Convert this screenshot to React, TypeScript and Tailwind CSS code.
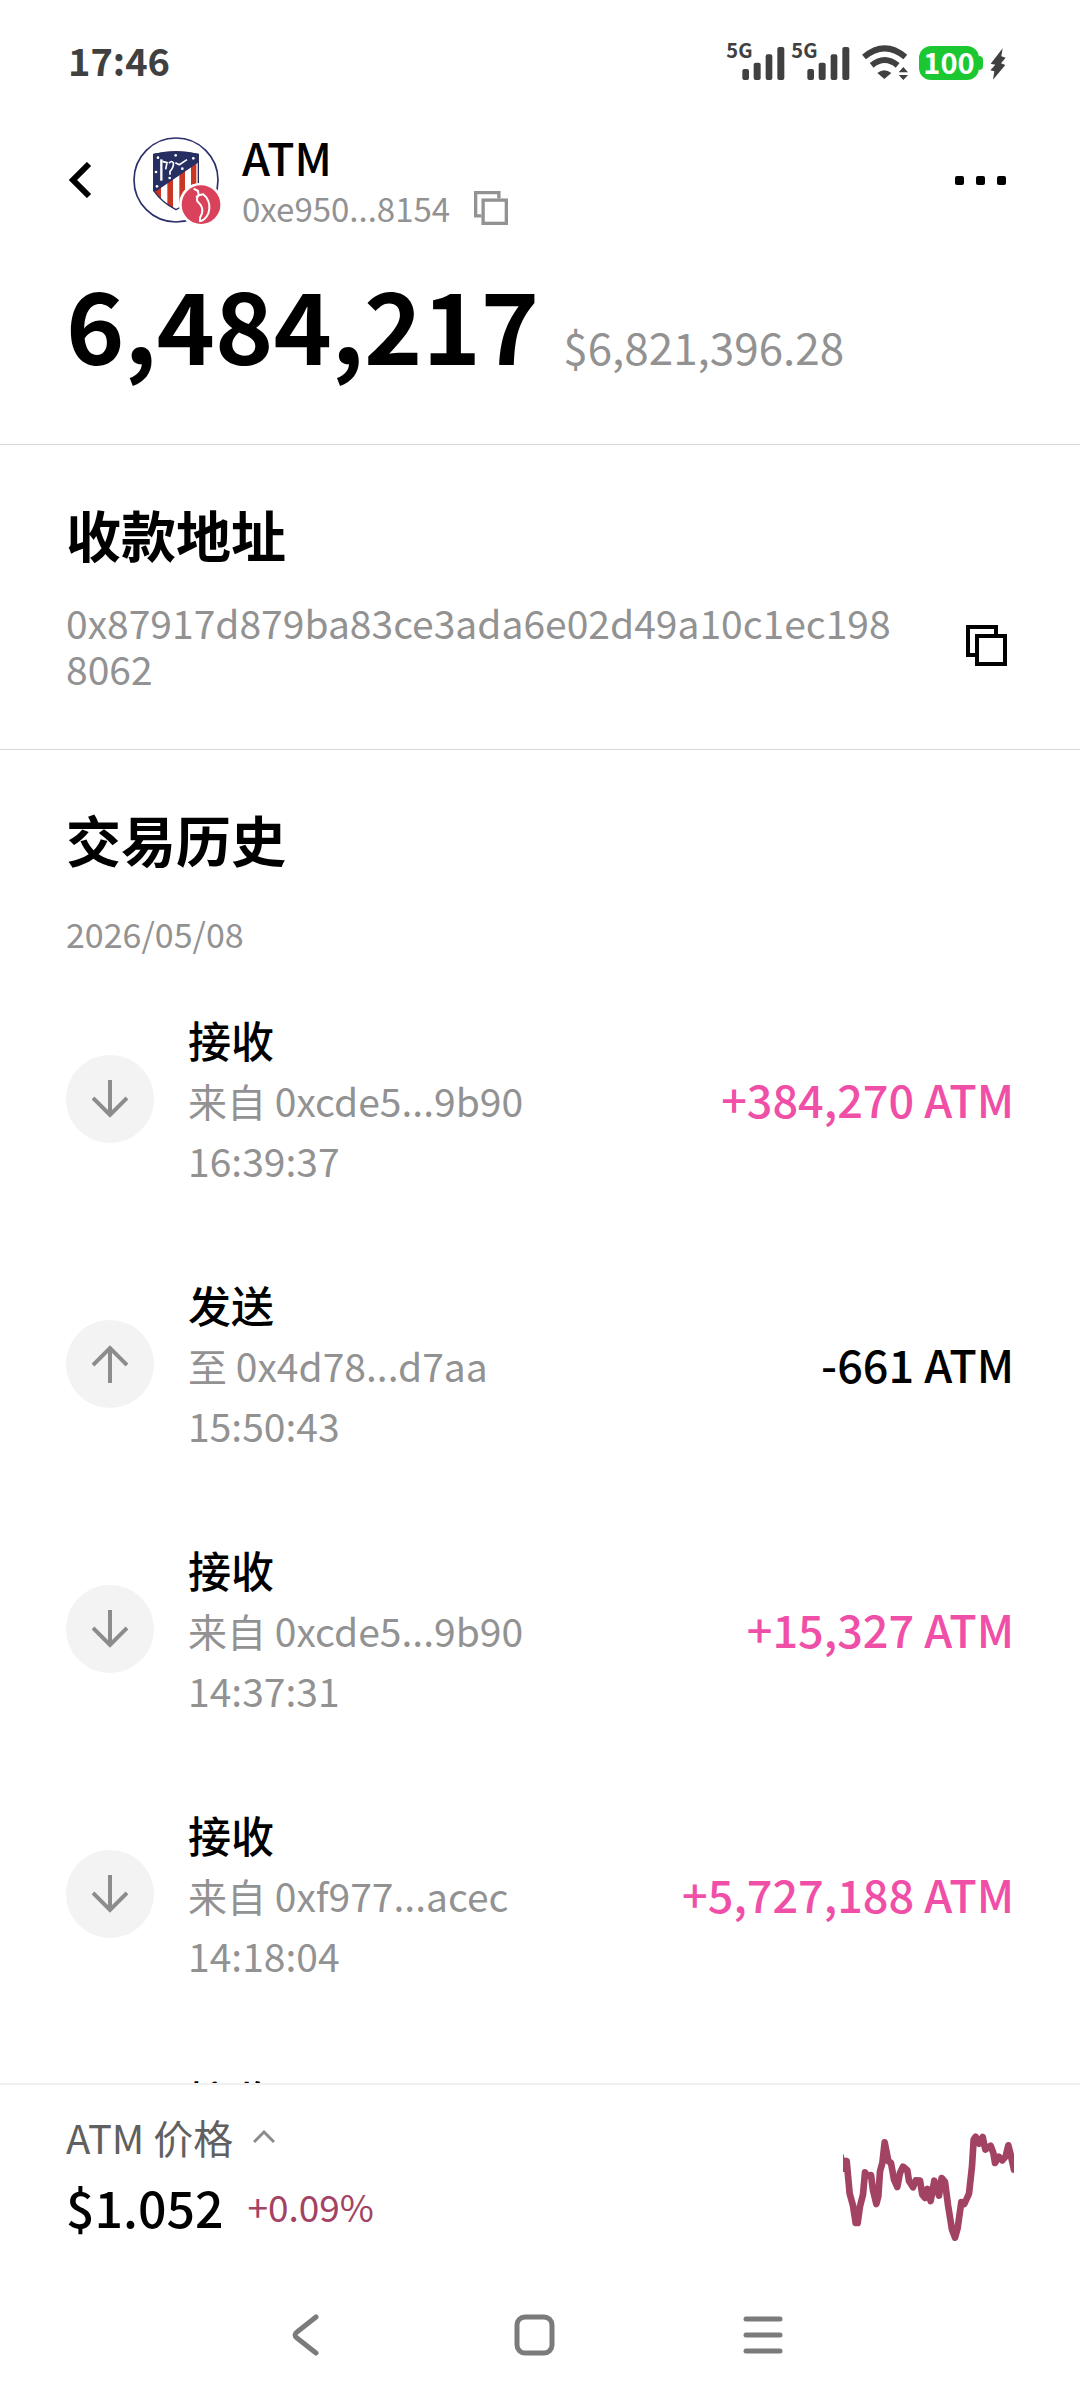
import { useState } from "react";

type TxKind = "in" | "out";

interface Transaction {
    kind: TxKind;
    peer?: string;
    time?: string;
    amount?: string;
}

const WALLET = "0x87917d879ba83ce3ada6e02d49a10c1ec1988062";

const transactions: Transaction[] = [
    { kind: "in", peer: "0xcde5...9b90", time: "16:39:37", amount: "+384,270 ATM" },
    { kind: "out", peer: "0x4d78...d7aa", time: "15:50:43", amount: "-661 ATM" },
    { kind: "in", peer: "0xcde5...9b90", time: "14:37:31", amount: "+15,327 ATM" },
    { kind: "in", peer: "0xf977...acec", time: "14:18:04", amount: "+5,727,188 ATM" },
    { kind: "in" },
];

function Signal() {
    return (
        <svg viewBox="0 0 174 114" className="w-[58px] h-[38px] overflow-visible" fill="#404040">
            <text x="-2" y="48" fontSize="60" fontWeight="700">5G</text>
            <rect x="46" y="81" width="20" height="33" rx="6" />
            <rect x="80" y="62" width="21" height="52" rx="6" />
            <rect x="116" y="37" width="20" height="77" rx="6" />
            <rect x="151" y="15" width="21" height="99" rx="6" />
        </svg>
    );
}

function StatusBar() {
    return (
        <div className="flex items-center justify-between h-[124px] pl-[68px] pr-[74px]">
            <span className="text-[38px] leading-[56px] font-bold text-[#404040] pb-1">17:46</span>
            <div className="flex items-end h-[38px] pb-px">
                <div className="flex gap-[7px]">
                    <Signal />
                    <Signal />
                </div>
                <svg viewBox="0 0 138 105" className="w-[46px] h-[35px] ml-3" fill="none" stroke="#404040" strokeWidth="18">
                    <path d="M6 36 Q68 -16 130 36" />
                    <path d="M29 61 Q68 29 107 61" />
                    <path d="M46 84 Q67 67 88 84 L67 102 Z" fill="#404040" stroke="none" />
                    <path d="M124 66 L138 82 H110 Z M110 90 H138 L124 105 Z" fill="#404040" stroke="none" />
                </svg>
                <div className="flex items-center ml-[11px]">
                    <span className="flex items-center justify-center w-[60px] h-[34px] rounded-[12px] bg-[#1cc832] text-white text-[29px] leading-none font-bold pb-1">
                        100
                    </span>
                    <span className="w-1 h-[14px] rounded-r bg-[#1cc832]" />
                </div>
                <svg viewBox="0 0 48 94" className="w-4 h-[32px] ml-[7px]" fill="#404040">
                    <path d="M38 0 L2 46 L16 49 L1 66 L13 69 L9 94 L46 50 L33 45 L47 28 L34 24 Z" />
                </svg>
            </div>
        </div>
    );
}

function TokenLogo() {
    return (
        <svg viewBox="276 36 276 288" className="w-[92px] h-[96px]" role="img" aria-label="ATM">
            <circle cx="408" cy="180" r="126" fill="#fff" stroke="#2b2f6b" strokeWidth="5" />
            <clipPath id="shield">
                <path d="M340 102 Q408 86 476 102 V212 Q446 252 408 270 Q366 248 340 212 Z" />
            </clipPath>
            <g clipPath="url(#shield)">
                <rect x="336" y="90" width="144" height="184" fill="#fff" />
                <path d="M346 90 h17 v184 h-17z M382 90 h17 v184 h-17z M418 90 h17 v184 h-17z M453 90 h16 v184 h-16z" fill="#cb3524" />
                <path d="M336 88 H480 V124 L336 222 Z" fill="#272e61" />
            </g>
            <path d="M341 103 Q408 87 475 103 V212 Q446 252 408 269 Q366 248 341 212 Z" fill="none" stroke="#272e61" strokeWidth="4" />
            <path d="M364 118 V182" stroke="#fff" strokeWidth="7" />
            <path d="M367 124 L381 128 L377 148 M387 130 Q394 120 400 128 Q402 142 390 154 V164 M406 128 L418 134 L441 119" fill="none" stroke="#fff" strokeWidth="5" />
            <g fill="#fff">
                <circle cx="354" cy="113" r="4" />
                <circle cx="407" cy="106" r="4" />
                <circle cx="460" cy="115" r="4" />
                <circle cx="348" cy="156" r="4" />
                <circle cx="351" cy="199" r="4" />
                <circle cx="389" cy="174" r="4" />
                <circle cx="427" cy="146" r="4" />
            </g>
            <circle cx="483" cy="254" r="66" fill="#fff" />
            <circle cx="483" cy="254" r="58" fill="#d9425a" />
            <path d="M461 206 L474 213 L476 226 L468 232 M476 226 L490 223 L499 232 Q514 256 505 280 Q496 300 480 304 Q478 292 486 280 Q490 262 478 250 Q464 240 476 226" fill="none" stroke="#fff" strokeWidth="6" strokeLinejoin="round" />
        </svg>
    );
}

function CopyIcon({ className }: { className: string }) {
    return (
        <svg viewBox="0 0 41 41" className={className} fill="none" stroke="currentColor" strokeWidth="4">
            <path d="M9 30 H2 V2 H30 V9" />
            <rect x="11" y="11" width="28" height="28" />
        </svg>
    );
}

function TransactionRow({ tx }: { tx: Transaction }) {
    const incoming = tx.kind === "in";

    return (
        <li className="flex items-center shrink-0">
            <span className="flex items-center justify-center w-[88px] h-[88px] rounded-full bg-[#f3f3f3]">
                <svg
                    viewBox="0 0 36 38"
                    className={`w-9 h-[38px] ${incoming ? "" : "rotate-180"}`}
                    fill="none"
                    stroke="#8c8c8c"
                    strokeWidth="4"
                >
                    <path d="M18 0 V35 M1 18 L18 35 L35 18" />
                </svg>
            </span>
            <div className="flex-1 min-h-[182px] ml-[34px] text-[39px] leading-[60px] text-[#929292]">
                <p className="text-[43px] leading-[62px] font-medium text-black">{incoming ? "接收" : "发送"}</p>
                {tx.peer && <p>{incoming ? "来自" : "至"} {tx.peer}</p>}
                {tx.time && <p>{tx.time}</p>}
            </div>
            {tx.amount && (
                <span className={`text-[45px] font-medium ${incoming ? "text-[#f04fa8]" : "text-black"}`}>{tx.amount}</span>
            )}
        </li>
    );
}

export default function App() {
    const [copied, setCopied] = useState(false);

    const handleCopy = (text: string) => {
        navigator.clipboard?.writeText(text);
        setCopied(true);
    };

    return (
        <div className="flex flex-col w-full h-screen overflow-hidden bg-white text-black font-['Noto_Sans_CJK_SC',sans-serif]">
            <StatusBar />

            <header className="flex items-center h-[112px] pl-[68px] pr-[74px]">
                <button aria-label="返回" className="w-16">
                    <svg viewBox="0 0 24 36" className="w-6 h-9" fill="none" stroke="currentColor" strokeWidth="6">
                        <path d="M21 2 L5 18 L21 34" />
                    </svg>
                </button>
                <TokenLogo />
                <div className="flex-1 ml-[18px]">
                    <h1 className="text-[45px] leading-[56px] font-medium">ATM</h1>
                    <div className="flex items-center gap-6 text-[33px] leading-[46px] text-[#929292]">
                        <span>0xe950...8154</span>
                        <button aria-label="复制合约地址" onClick={() => handleCopy("0xe950...8154")}>
                            <CopyIcon className="w-[34px] h-[34px]" />
                        </button>
                    </div>
                </div>
                <button aria-label="更多" className="flex gap-3">
                    <span className="w-[9px] h-[9px] rounded-xs bg-black" />
                    <span className="w-[9px] h-[9px] rounded-xs bg-black" />
                    <span className="w-[9px] h-[9px] rounded-xs bg-black" />
                </button>
            </header>

            <section className="flex items-baseline gap-6 h-[209px] pt-6 px-[66px] border-b border-[#d8d8d8]">
                <span className="text-[99px] leading-[124px] font-bold">6,484,217</span>
                <span className="text-[44px] text-[#929292]">$6,821,396.28</span>
            </section>

            <section className="px-[66px] pt-[50px] pb-[58px] border-b border-[#d8d8d8]">
                <h2 className="text-[55px] leading-[76px] font-bold">收款地址</h2>
                <div className="flex items-center justify-between mt-7 pr-[7px]">
                    <p className="w-[830px] text-[39px] leading-[46px] break-all text-[#929292]">{WALLET}</p>
                    <button aria-label={copied ? "已复制" : "复制收款地址"} onClick={() => handleCopy(WALLET)}>
                        <CopyIcon className="w-[41px] h-[41px]" />
                    </button>
                </div>
            </section>

            <main className="flex-1 min-h-0 overflow-hidden px-[66px] pt-[50px]">
                <h2 className="text-[55px] leading-[76px] font-bold">交易历史</h2>
                <p className="mt-[34px] text-[34px] leading-[48px] text-[#929292]">2026/05/08</p>
                <ul className="flex flex-col gap-[83px] mt-[50px]">
                    {transactions.map((tx, i) => (
                        <TransactionRow key={i} tx={tx} />
                    ))}
                </ul>
            </main>

            <footer className="border-t-2 border-[#f0f0f0]">
                <div className="flex items-center justify-between h-[184px] px-[66px]">
                    <div>
                        <button className="flex items-center gap-5 text-[40px] leading-[58px] text-[#606060]">
                            ATM 价格
                            <svg viewBox="0 0 22 14" className="w-[22px] h-[14px]" fill="none" stroke="#8c8c8c" strokeWidth="3">
                                <path d="M1 12 L11 2 L21 12" />
                            </svg>
                        </button>
                        <p className="flex items-center gap-6 leading-[80px]">
                            <span className="text-[50px] font-medium">$1.052</span>
                            <span className="text-[37px] text-[#a34363]">+0.09%</span>
                        </p>
                    </div>
                    <svg viewBox="69 100 513 324" className="w-[171px] h-[108px] mt-5" fill="none" stroke="#a34363" strokeWidth="20" strokeLinejoin="round" strokeLinecap="round">
                        <path d="M62 170 L71 207 L80 184 L89 282 L99 318 L107 370 L113 370 L120 320 L129 285 L135 218 L142 228 L153 226 L159 272 L169 313 L175 290 L180 215 L187 190 L194 128 L205 184 L213 190 L222 240 L232 262 L240 220 L249 201 L262 212 L267 244 L279 263 L287 242 L300 243 L307 285 L315 295 L322 268 L332 304 L343 243 L357 288 L365 235 L375 247 L384 316 L396 390 L405 414 L413 385 L424 307 L433 313 L447 282 L456 200 L461 120 L467 111 L477 132 L488 112 L496 150 L512 138 L520 160 L525 190 L536 171 L547 182 L557 170 L565 137 L572 165 L582 210" />
                    </svg>
                </div>

                <nav className="flex items-center justify-center gap-[188px] h-[131px] pr-[11px] text-[#7b7b7b]">
                    <button aria-label="后退" className="w-10">
                        <svg viewBox="0 0 28 42" className="w-7 h-[42px] mx-auto" fill="none" stroke="currentColor" strokeWidth="5" strokeLinecap="round">
                            <path d="M24 3 L5 18 Q1 21 5 24 L24 39" />
                        </svg>
                    </button>
                    <button aria-label="主屏幕">
                        <svg viewBox="0 0 41 42" className="w-[41px] h-[42px]" fill="none" stroke="currentColor" strokeWidth="5">
                            <rect x="3" y="3" width="35" height="36" rx="8" />
                        </svg>
                    </button>
                    <button aria-label="最近任务">
                        <svg viewBox="0 0 40 42" className="w-10 h-[42px]" fill="none" stroke="currentColor" strokeWidth="5" strokeLinecap="round">
                            <path d="M3 5 H37 M3 21 H37 M3 37 H37" />
                        </svg>
                    </button>
                </nav>
            </footer>
        </div>
    );
}
